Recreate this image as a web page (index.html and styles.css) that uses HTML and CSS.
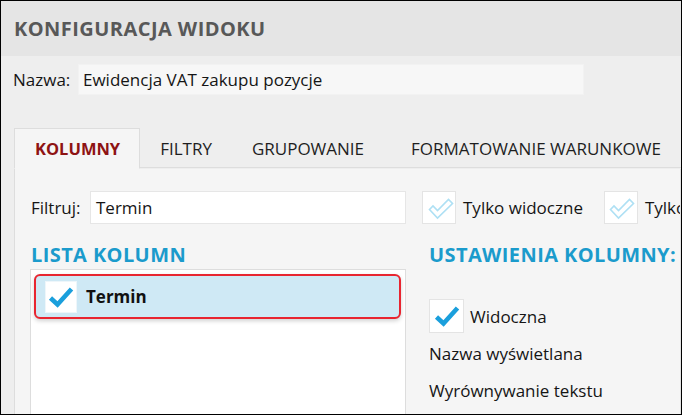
FILE: index.html
```html
<!DOCTYPE html>
<html lang="pl">
<head>
<meta charset="utf-8">
<title>Konfiguracja widoku</title>
<link rel="stylesheet" href="styles.css">
</head>
<body>
<div class="window">
  <header class="hdr"><h1 class="title">KONFIGURACJA WIDOKU</h1></header>
  <div class="main">
    <div class="name-row">
      <span class="name-label">Nazwa:</span>
      <div class="name-input">Ewidencja VAT zakupu pozycje</div>
    </div>
    <div class="tabs">
      <div class="tab active">KOLUMNY</div>
      <div class="tab">FILTRY</div>
      <div class="tab">GRUPOWANIE</div>
      <div class="tab tab-last">FORMATOWANIE WARUNKOWE</div>
      <div class="tab-rest"></div>
    </div>
    <div class="panel">
      <div class="filter-row">
        <span class="filter-label">Filtruj:</span>
        <div class="filter-input">Termin</div>
        <div class="cb cb-light">
          <svg width="28" height="24" viewBox="0 0 28 24"><path d="M2.5 13.5 L6 10 L10.5 14.5 L21.5 3.5 L25.5 7.5 L10.5 22 Z" fill="none" stroke="#aee0f4" stroke-width="1.6" stroke-linejoin="miter"/></svg>
        </div>
        <span class="cb-label">Tylko widoczne</span>
        <div class="cb cb-light cb2">
          <svg width="28" height="24" viewBox="0 0 28 24"><path d="M2.5 13.5 L6 10 L10.5 14.5 L21.5 3.5 L25.5 7.5 L10.5 22 Z" fill="none" stroke="#aee0f4" stroke-width="1.6" stroke-linejoin="miter"/></svg>
        </div>
        <span class="cb-label">Tylko wybrane</span>
      </div>
      <div class="cols">
        <div class="col-left">
          <h2 class="section">LISTA KOLUMN</h2>
          <div class="list">
            <div class="item">
              <div class="cb cb-item">
                <svg width="26" height="22" viewBox="0 0 26 22"><path d="M2.5 12 L9.5 18.5 L23.5 3" fill="none" stroke="#1a9fdc" stroke-width="4.6"/></svg>
              </div>
              <span class="item-text">Termin</span>
            </div>
          </div>
        </div>
        <div class="col-right">
          <h2 class="section">USTAWIENIA KOLUMNY: Termin</h2>
          <div class="check-row">
            <div class="cb cb-vis">
              <svg width="26" height="22" viewBox="0 0 26 22"><path d="M2.5 12 L9.5 18.5 L23.5 3" fill="none" stroke="#1a9fdc" stroke-width="4.6"/></svg>
            </div>
            <span class="cb-label">Widoczna</span>
          </div>
          <div class="prop">Nazwa wyświetlana</div>
          <div class="prop">Wyrównywanie tekstu</div>
        </div>
      </div>
    </div>
  </div>
</div>
</body>
</html>
```
FILE: styles.css
```css
* { box-sizing: border-box; }
html, body { margin: 0; padding: 0; background: #ffffff; }
body { font-family: "Open Sans", "Noto Sans", sans-serif; color: #151515; }

.window {
  width: 682px;
  height: 415px;
  border: 1px solid #000;
  background: #eeeeee;
  overflow: hidden;
  display: flex;
  flex-direction: column;
}

.hdr {
  height: 55px;
  flex: none;
  background: #e5e5e5;
  display: flex;
  align-items: center;
  padding-left: 13px;
}
.title {
  margin: 0;
  font-size: 20px;
  font-weight: 700;
  color: #585858;
  letter-spacing: 0.45px;
  white-space: nowrap;
}

.main { flex: 1; display: flex; flex-direction: column; min-height: 0; }

.name-row {
  display: flex;
  align-items: center;
  margin-top: 8px;
  padding-left: 12px;
  height: 31px;
  flex: none;
}
.name-label { font-size: 17px; width: 65px; flex: none; }
.name-input {
  width: 506px;
  flex: none;
  height: 31px;
  background: #f7f7f7;
  border: 1px solid #f2f2f2;
  font-size: 17px;
  padding-left: 4px;
  display: flex;
  align-items: center;
  white-space: nowrap;
}

.tabs {
  display: flex;
  margin-top: 33px;
  padding-left: 13px;
  height: 41px;
  flex: none;
}
.tab {
  flex: none;
  height: 40px;
  padding: 0 20px;
  display: flex;
  align-items: center;
  font-size: 17px;
  color: #1e1e1e;
  border-bottom: 1px solid #dddddd;
  border-top: 1px solid transparent;
  white-space: nowrap;
}
.tab.active {
  font-weight: 700;
  font-size: 16.5px;
  color: #8e1313;
  background: #f5f5f5;
  border: 1px solid #dddddd;
  border-bottom-color: #f5f5f5;
  height: 41px;
  padding: 0 19px 1px 20px;
}
.tab-last { padding-left: 27px; }
.tab-rest { flex: 1; height: 40px; border-bottom: 1px solid #dddddd; }

.panel {
  flex: 1;
  background: #f5f5f5;
  margin-left: 13px;
  border-left: 1px solid #dddddd;
  border-right: 1px solid #e2e2e2;
  padding: 22px 0 0 16px;
  min-height: 0;
  overflow: hidden;
}

.filter-row {
  display: flex;
  align-items: center;
  height: 33px;
  white-space: nowrap;
}
.filter-label { font-size: 17px; width: 59px; flex: none; }
.filter-input {
  flex: none;
  width: 316px;
  height: 33px;
  background: #ffffff;
  border: 1px solid #e6e6e6;
  font-size: 17px;
  padding-left: 5px;
  display: flex;
  align-items: center;
  margin-right: 16px;
}
.cb {
  flex: none;
  display: flex;
  align-items: center;
  justify-content: center;
  background: #ffffff;
  border: 1px solid #e4e4e4;
}
.cb-light { width: 34px; height: 33px; margin-right: 7px; padding-left: 3px; }
.cb2 { margin-left: 21px; }
.cb-label { font-size: 17px; flex: none; }

.cols { display: flex; margin-top: 18px; gap: 23px; }
.col-left { width: 376px; flex: none; margin-left: -1px; }
.col-right { flex: none; width: 300px; white-space: nowrap; }

.section {
  margin: 0;
  font-size: 20px;
  font-weight: 700;
  color: #1b9bcc;
  line-height: 26px;
  letter-spacing: 0.4px;
  white-space: nowrap;
}
.col-left .section { padding-left: 1px; }

.list {
  margin-top: 1px;
  height: 200px;
  background: #ffffff;
  border: 1px solid #dddddd;
  padding: 4px 4px 0 3px;
}
.item {
  height: 45px;
  border: 2px solid #e82530;
  border-radius: 6px;
  background: #cfe9f5;
  box-shadow: 0 2px 4px rgba(0,0,0,0.18);
  display: flex;
  align-items: center;
  padding-left: 9px;
}
.cb-item { width: 32px; height: 32px; border-color: #eef6fa; margin-right: 9px; }
.item-text { font-size: 17px; font-weight: 700; color: #111; }

.check-row {
  display: flex;
  align-items: center;
  margin-top: 31px;
  height: 34px;
}
.cb-vis { width: 35px; height: 34px; margin-right: 6px; }
.prop { font-size: 17px; margin-top: 6px; height: 29px; line-height: 29px; }
.prop + .prop { margin-top: 8px; }
```
